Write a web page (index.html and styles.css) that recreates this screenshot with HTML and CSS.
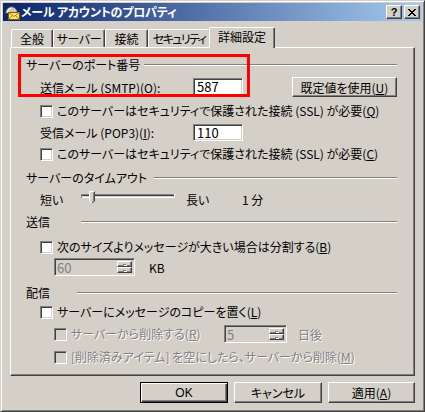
FILE: index.html
```html
<!DOCTYPE html>
<html lang="ja">
<head>
<meta charset="utf-8">
<title>メール アカウントのプロパティ</title>
<link rel="stylesheet" href="styles.css">
</head>
<body>
<div class="window">
  <div class="titlebar">
    <svg class="ticon" width="16" height="16" viewBox="0 0 16 16">
      <path d="M1.5 9.5 Q1.5 3.5 7.5 2.5 Q13.5 3.5 13.5 9.5 Z" fill="#c8c8c8" stroke="#404040"/>
      <path d="M3.5 8 Q4 5 7.5 4" fill="none" stroke="#ffffff"/>
      <rect x="4.5" y="8.5" width="11" height="7" fill="#ffe27a" stroke="#7a5a00"/>
      <path d="M4.5 8.5 L10 12.5 L15.5 8.5 M4.5 15.5 L8.5 11.5 M15.5 15.5 L11.5 11.5" fill="none" stroke="#b08800"/>
    </svg>
    <span class="ttext">メール アカウントのプロパティ</span>
    <span class="cbtn help">?</span>
    <span class="cbtn close"><svg width="8" height="7" viewBox="0 0 8 7"><path d="M0 0 L7 7 M1 0 L8 7 M7 0 L0 7 M8 0 L1 7" stroke="#000" stroke-width="1"/></svg></span>
  </div>

  <div class="tabs">
    <div class="tab t1">全般</div>
    <div class="tab t2">サーバー</div>
    <div class="tab t3">接続</div>
    <div class="tab t4">セキュリティ</div>
    <div class="tab sel">詳細設定</div>
  </div>

  <div class="panel">
    <div class="redbox"></div>

    <div class="ghead port-head"><span class="glabel gl-port">サーバーのポート番号</span><span class="gline"></span></div>
    <div class="row smtp-row ind1">
      <span class="flabel">送信メール (SMTP)(<u>O</u>):</span>
      <span class="edit num-edit smtp-edit">587</span>
      <span class="btn default-btn">既定値を使用(<u>U</u>)</span>
    </div>
    <div class="row cb-row cb1 ind1"><span class="check"></span><span class="ctext">このサーバーはセキュリティで保護された接続 (SSL) が必要(<u>Q</u>)</span></div>
    <div class="row pop-row ind1">
      <span class="flabel">受信メール (POP3)(<u>I</u>):</span>
      <span class="edit num-edit pop-edit">110</span>
    </div>
    <div class="row cb-row cb2 ind1"><span class="check"></span><span class="ctext">このサーバーはセキュリティで保護された接続 (SSL) が必要(<u>C</u>)</span></div>

    <div class="ghead timeout-head"><span class="glabel gl-timeout">サーバーのタイムアウト</span><span class="gline"></span></div>
    <div class="row slider-row ind1">
      <span class="short-lbl">短い</span>
      <svg class="slider" width="94" height="18" viewBox="0 0 94 18">
        <rect x="0" y="4" width="94" height="1" fill="#808080"/>
        <rect x="0" y="5" width="94" height="1" fill="#404040"/>
        <rect x="0" y="6" width="94" height="1" fill="#d4d0c8"/>
        <rect x="0" y="7" width="94" height="1" fill="#ffffff"/>
        <rect x="0" y="4" width="1" height="4" fill="#808080"/>
        <rect x="93" y="4" width="1" height="4" fill="#ffffff"/>
        <path d="M8 1 H14 V11 L11 14 L8 11 Z" fill="#d4d0c8"/>
        <path d="M8.5 11 V1.5 H13.5" fill="none" stroke="#ffffff"/>
        <path d="M13.5 1.5 V11 L11 13.5" fill="none" stroke="#404040"/>
        <path d="M12.5 2.5 V10.5 L11 12" fill="none" stroke="#808080"/>
        <path d="M8.5 11 L11 13.5" fill="none" stroke="#ffffff"/>
      </svg>
      <span class="long-lbl">長い</span>
      <span>1 分</span>
    </div>

    <div class="ghead send-head"><span class="glabel gl-send">送信</span><span class="gline"></span></div>
    <div class="row cb-row cb3 ind1"><span class="check"></span><span class="ctext">次のサイズよりメッセージが大きい場合は分割する(<u>B</u>)</span></div>
    <div class="row spin-row ind2">
      <span class="spin spin-size"><span class="spin-val">60</span><span class="spin-btns"><span class="sb up"><i></i></span><span class="sb down"><i></i></span></span></span>
      <span class="kb">KB</span>
    </div>

    <div class="ghead deliv-head"><span class="glabel gl-deliv">配信</span><span class="gline"></span></div>
    <div class="row cb-row cb4 ind1"><span class="check"></span><span class="ctext">サーバーにメッセージのコピーを置く(<u>L</u>)</span></div>
    <div class="row del-row ind2">
      <span class="del-lbl"><span class="check disabled"></span><span class="ctext dim">サーバーから削除する(<u>R</u>)</span></span>
      <span class="spin spin-days"><span class="spin-val">5</span><span class="spin-btns"><span class="sb up"><i></i></span><span class="sb down"><i></i></span></span></span>
      <span class="days dim">日後</span>
    </div>
    <div class="row cb-row cb5 ind2"><span class="check disabled"></span><span class="ctext dim">[削除済みアイテム] を空にしたら、サーバーから削除(<u>M</u>)</span></div>
  </div>

  <div class="buttons">
    <span class="btn ok-btn">OK</span>
    <span class="btn bottom-btn">キャンセル</span>
    <span class="btn bottom-btn apply-btn">適用(<u>A</u>)</span>
  </div>
</div>
</body>
</html>
```

FILE: styles.css
```css
* { box-sizing: border-box; }
html, body { margin: 0; padding: 0; }
body {
  background: #d4d0c8;
  font-family: "Noto Sans CJK JP", "Liberation Sans", sans-serif;
  font-size: 12px;
  color: #000;
  font-feature-settings: "palt";
}
u { text-decoration: underline; text-underline-offset: 1px; }

.window {
  width: 425px;
  height: 412px;
  border: 1px solid;
  border-color: #d4d0c8 #404040 #404040 #d4d0c8;
  box-shadow: inset 1px 1px #ffffff, inset -1px -1px #808080;
  padding: 2px;
  display: flex;
  flex-direction: column;
  background: #d4d0c8;
}

/* title bar */
.titlebar {
  height: 18px;
  display: flex;
  align-items: center;
  padding: 0 2px 0 1px;
  background: linear-gradient(to right, #0a246a, #a6caf0);
}
.ticon { flex: none; }
.ttext {
  color: #fff;
  font-weight: bold;
  line-height: 18px;
  margin-left: 1px;
  letter-spacing: -0.2px;
}
.cbtn {
  width: 16px;
  height: 14px;
  background: #d4d0c8;
  border: 1px solid;
  border-color: #ffffff #404040 #404040 #ffffff;
  box-shadow: inset -1px -1px #808080;
  display: flex;
  align-items: center;
  justify-content: center;
}
.help {
  margin-left: auto;
  font-family: "Liberation Sans", sans-serif;
  font-weight: bold;
  font-size: 11px;
  line-height: 12px;
}
.close { margin-left: 2px; }

/* tabs */
.tabs {
  margin: 6px 7px 0 7px;
  height: 20px;
  display: flex;
  align-items: flex-end;
  padding-left: 1px;
  position: relative;
  z-index: 1;
}
.tab {
  height: 18px;
  line-height: 17px;
  text-align: center;
  white-space: nowrap;
  overflow: hidden;
  border-top: 1px solid #fff;
  border-left: 1px solid #fff;
  border-right: 1px solid #404040;
  box-shadow: inset -1px 0 #808080;
  border-radius: 2px 2px 0 0;
  background: #d4d0c8;
  flex: none;
}
.t1 { width: 42px; }
.t2 { width: 52px; letter-spacing: -0.3px; }
.t3 { width: 43px; }
.t4 { width: 63px; letter-spacing: -1.6px; padding-right: 1px; }
.tab.sel {
  width: 66px;
  height: 21px;
  margin: 0 0 -1px -2px;
  line-height: 18px;
}

/* panel */
.panel {
  position: relative;
  margin: 0 7px;
  height: 329px;
  border-top: 1px solid #fff;
  border-left: 1px solid #fff;
  border-right: 1px solid #404040;
  border-bottom: 1px solid #404040;
  box-shadow: inset -1px -1px #808080;
  padding: 0 17px 0 15px;
  display: flex;
  flex-direction: column;
}
.redbox {
  position: absolute;
  left: 7px;
  top: 6px;
  width: 232px;
  height: 43px;
  border: 3px solid #ff0000;
}

.ghead {
  height: 14px;
  display: flex;
  align-items: center;
}
.glabel { line-height: 14px; white-space: nowrap; flex: none; }
.gl-port { width: 118px; }
.gl-timeout { width: 128px; }
.gl-send { width: 55px; }
.gl-deliv { width: 51px; }
.gline {
  flex: 1;
  height: 2px;
  border-top: 1px solid #808080;
  border-bottom: 1px solid #fff;
}

.row {
  display: flex;
  align-items: center;
  white-space: nowrap;
}
.ind1 { padding-left: 14px; }
.ind2 { padding-left: 28px; }

.port-head { margin-top: 10px; }
.smtp-row { margin-top: 5px; height: 20px; }
.cb1 { margin-top: 7px; }
.pop-row { margin-top: 5px; height: 18px; }
.cb2 { margin-top: 6px; }
.timeout-head { margin-top: 10px; }
.slider-row { margin-top: 5px; height: 18px; }
.send-head { margin-top: 7px; }
.cb3 { margin-top: 11px; }
.spin-row { margin-top: 4px; height: 18px; }
.deliv-head { margin-top: 10px; }
.cb4 { margin-top: 5px; }
.del-row { margin-top: 6px; height: 18px; }
.cb5 { margin-top: 7px; }

.cb-row { height: 14px; }

.flabel { width: 153px; flex: none; }

.edit {
  height: 18px;
  background: #fff;
  border: 1px solid;
  border-color: #808080 #ffffff #ffffff #808080;
  box-shadow: inset 1px 1px #404040, inset -1px -1px #d4d0c8;
  padding-left: 3px;
  line-height: 16px;
  font-size: 13px;
}
.smtp-edit { width: 50px; }
.pop-edit { width: 50px; height: 17px; line-height: 15px; }

.btn {
  display: flex;
  align-items: center;
  justify-content: center;
  background: #d4d0c8;
  border: 1px solid;
  border-color: #ffffff #404040 #404040 #ffffff;
  box-shadow: inset -1px -1px #808080;
}
.default-btn {
  margin-left: 49px;
  width: 106px;
  height: 20px;
}

.check {
  width: 13px;
  height: 13px;
  flex: none;
  background: #fff;
  border: 1px solid;
  border-color: #808080 #ffffff #ffffff #808080;
  box-shadow: inset 1px 1px #404040, inset -1px -1px #d4d0c8;
}
.check.disabled { background: #d4d0c8; }
.ctext { margin-left: 4px; line-height: 14px; }
.dim { color: #808080; text-shadow: 1px 1px 0 #ffffff; }

/* slider */
.short-lbl { width: 41px; flex: none; }
.slider { flex: none; }
.long-lbl { margin-left: 11px; width: 56px; flex: none; }

/* spin boxes */
.spin {
  display: flex;
  height: 18px;
  background: #d4d0c8;
  border: 1px solid;
  border-color: #808080 #ffffff #ffffff #808080;
  box-shadow: inset 1px 1px #404040, inset -1px -1px #d4d0c8;
  padding: 2px 2px 2px 2px;
}
.spin-size { width: 81px; }
.spin-days { width: 63px; }
.spin-val {
  flex: 1;
  color: #808080;
  line-height: 14px;
  font-size: 13px;
}
.spin-btns {
  width: 15px;
  display: flex;
  flex-direction: column;
}
.sb {
  flex: 1;
  border: 1px solid;
  border-color: #ffffff #404040 #404040 #ffffff;
  box-shadow: inset -1px -1px #808080;
  background: #d4d0c8;
  display: flex;
  align-items: center;
  justify-content: center;
}
.sb i {
  display: block;
  width: 3px;
  height: 1px;
  background: #808080;
  box-shadow: 1px 1px #ffffff;
}
.kb { margin-left: 14px; }
.del-lbl { width: 170px; flex: none; display: flex; align-items: center; }
.days { margin-left: 11px; }

/* bottom buttons */
.buttons {
  margin-top: 6px;
  height: 21px;
  display: flex;
  justify-content: flex-end;
  padding-right: 7px;
}
.buttons .btn { width: 88px; height: 21px; margin-left: 6px; }
.ok-btn {
  border: 1px solid #000;
  box-shadow: inset 1px 1px #ffffff, inset -1px -1px #404040, inset -2px -2px #808080;
  font-family: "Liberation Sans", sans-serif;
}
.apply-btn { width: 87px !important; }
```
